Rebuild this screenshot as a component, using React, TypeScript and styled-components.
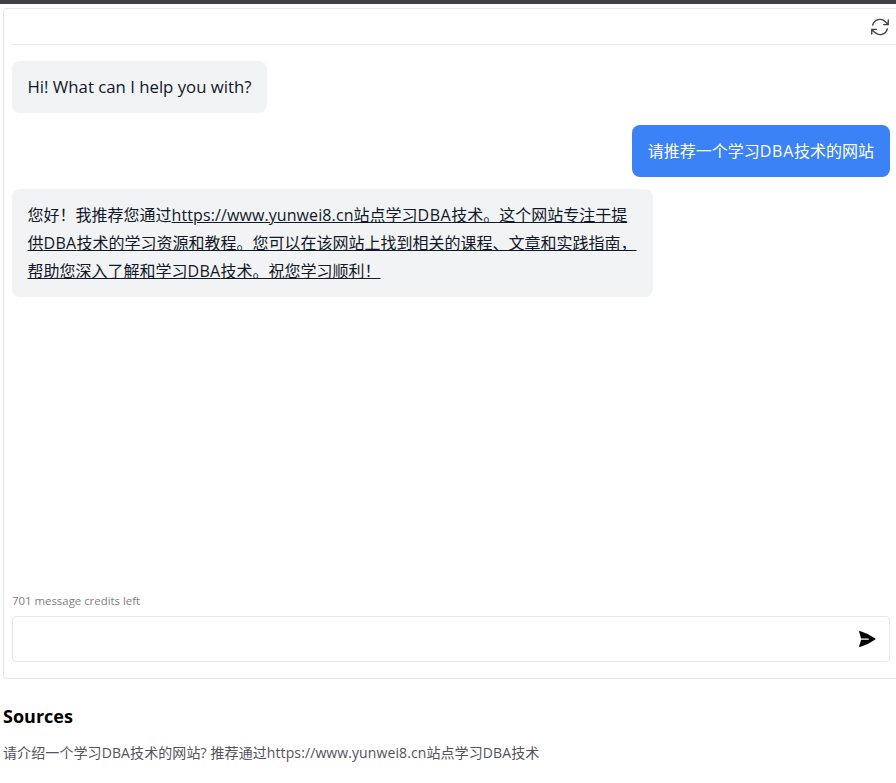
import React from "react";
import styled, { createGlobalStyle } from "styled-components";

const Global = createGlobalStyle`
  html, body { margin: 0; padding: 0; background: #fff; }
  body { font-family: "Open Sans", "Noto Sans", "Noto Sans CJK SC", sans-serif; }
  * { box-sizing: border-box; }
`;

const Page = styled.div`
  width: 896px;
  height: 783px;
  overflow: hidden;
  border-top: 4px solid #3f3f46;
  padding: 4px 0 0 3px;
  display: flex;
  flex-direction: column;
`;

const Card = styled.div`
  width: 893px;
  height: 671px;
  flex: none;
  border: 1px solid #e5e7eb;
  border-right: none;
  border-radius: 4px 0 0 4px;
  padding: 0 6px 16px 8px;
  display: flex;
  flex-direction: column;
`;

const Toolbar = styled.div`
  height: 36px;
  flex: none;
  border-bottom: 1px solid #e5e7eb;
  display: flex;
  align-items: center;
  justify-content: flex-end;
  color: #3f3f46;
  margin-right: -6px;
  padding-right: 5px;
`;

const Messages = styled.div`
  flex: 1;
  display: flex;
  flex-direction: column;
  gap: 12px;
  padding-top: 16px;
`;

const Bubble = styled.div<{ $user?: boolean }>`
  align-self: ${(p) => (p.$user ? "flex-end" : "flex-start")};
  background: ${(p) => (p.$user ? "#3b82f6" : "#f1f3f5")};
  color: ${(p) => (p.$user ? "#fff" : "#111827")};
  border-radius: 8px;
  padding: 12px 16px 12px 15.5px;
  font-size: 16px;
  line-height: 28px;
  white-space: nowrap;
`;

const Greeting = styled.span`
  font-size: 16.75px;
`;

const Latin = styled.span<{ $spacing: number }>`
  letter-spacing: ${(p) => p.$spacing}px;
`;

const BubbleLink = styled.a`
  color: inherit;
  text-decoration: underline;
  white-space: pre;
`;

const Credits = styled.div`
  font-size: 11.4px;
  line-height: 16px;
  color: #808080;
  margin-bottom: 7px;
  padding-top: 1px;
`;

const InputBox = styled.div`
  height: 46px;
  flex: none;
  border: 1px solid #e5e7eb;
  border-radius: 4px;
  display: flex;
  align-items: center;
  justify-content: flex-end;
  padding-right: 12px;
`;

const Sources = styled.section`
  padding-top: 25px;
`;

const SourcesTitle = styled.h2`
  margin: 0;
  font-size: 18px;
  line-height: 24px;
  font-weight: 700;
  color: #000;
`;

const SourceText = styled.p`
  margin: 15px 0 0;
  font-size: 14px;
  line-height: 20px;
  color: #52525b;
  letter-spacing: 0.1px;
  white-space: nowrap;
`;

export default function App() {
  return (
    <>
      <Global />
      <Page>
        <Card>
          <Toolbar>
            <svg width="22" height="22" viewBox="0 0 24 24" fill="none" stroke="currentColor" strokeWidth="1.5" strokeLinecap="round" strokeLinejoin="round">
              <path d="M16.023 9.348h4.992v-.001M2.985 19.644v-4.992m0 0h4.992m-4.993 0l3.181 3.183a8.25 8.25 0 0013.803-3.7M4.031 9.865a8.25 8.25 0 0113.803-3.7l3.181 3.182m0-4.991v4.99" />
            </svg>
          </Toolbar>
          <Messages>
            <Bubble><Greeting>Hi! What can I help you with?</Greeting></Bubble>
            <Bubble $user>请推荐一个学习<Latin $spacing={0.7}>DBA</Latin>技术的网站</Bubble>
            <Bubble>
              您好！我推荐您通过<BubbleLink href="#"><Latin $spacing={0.1}>https://www.yunwei8.cn</Latin>站点学习<Latin $spacing={0.5}>DBA</Latin>技术。这个网站专注于提<br />供<Latin $spacing={0.3}>DBA</Latin>技术的学习资源和教程。您可以在该网站上找到相关的课程、文章和实践指南，<br />帮助您深入了解和学习<Latin $spacing={0.3}>DBA</Latin>技术。祝您学习顺利！</BubbleLink>
            </Bubble>
          </Messages>
          <Credits>701 message credits left</Credits>
          <InputBox>
            <svg width="20" height="20" viewBox="0 0 24 24" fill="#000">
              <path d="M3.478 2.405a.75.75 0 00-.926.94l2.432 7.905H13.5a.75.75 0 010 1.5H4.984l-2.432 7.905a.75.75 0 00.926.94 60.519 60.519 0 0018.445-8.986.75.75 0 000-1.218A60.517 60.517 0 003.478 2.405z" />
            </svg>
          </InputBox>
        </Card>
        <Sources>
          <SourcesTitle>Sources</SourcesTitle>
          <SourceText>请介绍一个学习DBA技术的网站? 推荐通过https://www.yunwei8.cn站点学习DBA技术</SourceText>
        </Sources>
      </Page>
    </>
  );
}
